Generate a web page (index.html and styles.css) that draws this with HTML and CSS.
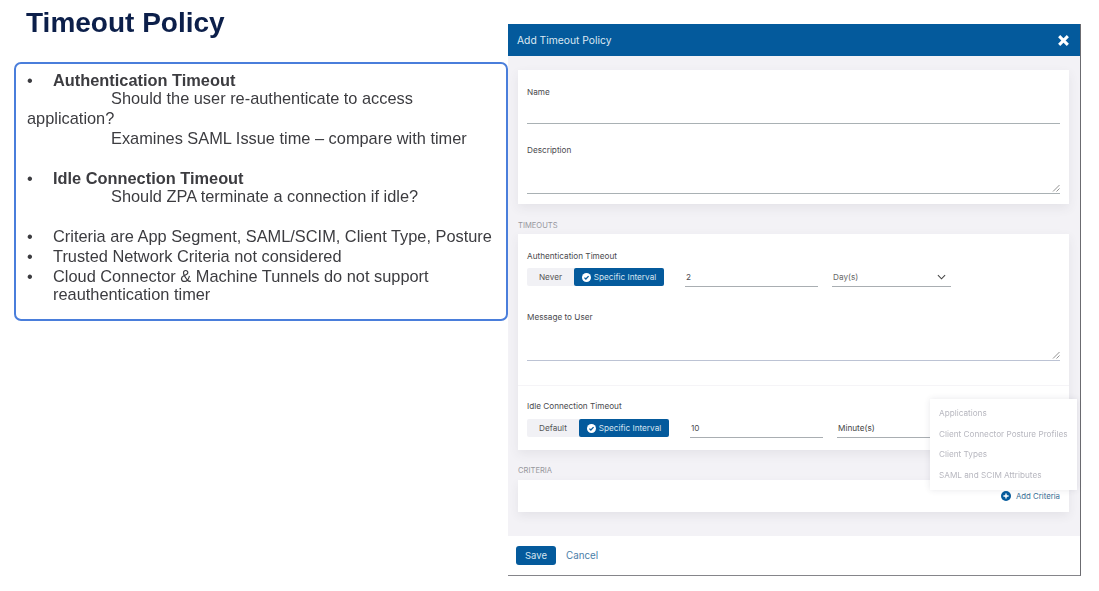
FILE: index.html
```html
<!DOCTYPE html>
<html lang="en">
<head>
<meta charset="utf-8">
<title>Timeout Policy</title>
<link rel="stylesheet" href="styles.css">
</head>
<body>
<main class="slide">
  <section class="left">
    <h1 class="title">Timeout Policy</h1>
    <div class="notes">
      <p class="row"><span class="dot">•</span><strong>Authentication Timeout</strong></p>
      <p class="sub">Should the user re-authenticate to access</p>
      <p class="wrapline">application?</p>
      <p class="sub">Examines SAML Issue time – compare with timer</p>
      <p class="row gap"><span class="dot">•</span><strong>Idle Connection Timeout</strong></p>
      <p class="sub">Should ZPA terminate a connection if idle?</p>
      <p class="row gap"><span class="dot">•</span><span>Criteria are App Segment, SAML/SCIM, Client Type, Posture</span></p>
      <p class="row tight"><span class="dot">•</span><span>Trusted Network Criteria not considered</span></p>
      <p class="row tight"><span class="dot">•</span><span>Cloud Connector &amp; Machine Tunnels do not support<br>reauthentication timer</span></p>
    </div>
  </section>

  <section class="dialog">
    <header class="dialog-head">
      <span>Add Timeout Policy</span>
      <svg class="close" viewBox="0 0 12 12" width="13" height="13"><path d="M2 2l8 8M10 2l-8 8" stroke="#fff" stroke-width="2.8" fill="none"/></svg>
    </header>
    <div class="dialog-body">
      <div class="card card-general">
        <div class="label">Name</div>
        <div class="line name-line"></div>
        <div class="label desc-label">Description</div>
        <div class="line desc-line">
          <svg class="grip" viewBox="0 0 8 8" width="8" height="8"><path d="M1 7.5L7.5 1M4.5 7.5L7.5 4.5" stroke="#777" stroke-width=".8" fill="none"/></svg>
        </div>
      </div>

      <div class="section-label timeouts-label">TIMEOUTS</div>
      <div class="card card-timeouts">
        <div class="auth-part">
          <div class="label">Authentication Timeout</div>
          <div class="controls">
            <div class="toggle">
              <span class="opt opt-never">Never</span>
              <span class="opt on">
                <svg class="check" viewBox="0 0 10 10" width="9" height="9"><circle cx="5" cy="5" r="5" fill="#fff"/><path d="M2.7 5.1l1.6 1.6 3-3.2" stroke="#045a9c" stroke-width="1.4" fill="none"/></svg>
                Specific Interval
              </span>
            </div>
            <div class="field field-num">2</div>
            <div class="field field-sel">Day(s)
              <svg viewBox="0 0 10 6" width="9" height="6"><path d="M1 1l4 4 4-4" stroke="#444" stroke-width="1.2" fill="none"/></svg>
            </div>
          </div>
          <div class="label msg-label">Message to User</div>
          <div class="line msg-line">
            <svg class="grip" viewBox="0 0 8 8" width="8" height="8"><path d="M1 7.5L7.5 1M4.5 7.5L7.5 4.5" stroke="#777" stroke-width=".8" fill="none"/></svg>
          </div>
        </div>
        <div class="idle-part">
          <div class="label">Idle Connection Timeout</div>
          <div class="controls idle-controls">
            <div class="toggle">
              <span class="opt opt-default">Default</span>
              <span class="opt on">
                <svg class="check" viewBox="0 0 10 10" width="9" height="9"><circle cx="5" cy="5" r="5" fill="#fff"/><path d="M2.7 5.1l1.6 1.6 3-3.2" stroke="#045a9c" stroke-width="1.4" fill="none"/></svg>
                Specific Interval
              </span>
            </div>
            <div class="field field-num">10</div>
            <div class="field field-sel dark">Minute(s)</div>
          </div>
        </div>
      </div>

      <div class="section-label criteria-label">CRITERIA</div>
      <div class="card card-criteria">
        <span class="add">
          <svg viewBox="0 0 10 10" width="10" height="10"><circle cx="5" cy="5" r="5" fill="#045a9c"/><path d="M5 2.4v5.2M2.4 5h5.2" stroke="#fff" stroke-width="1.4"/></svg>
          Add Criteria
        </span>
      </div>
    </div>
    <footer class="dialog-foot">
      <span class="save">Save</span>
      <span class="cancel">Cancel</span>
    </footer>
    <div class="menu">
      <div>Applications</div>
      <div>Client Connector Posture Profiles</div>
      <div>Client Types</div>
      <div>SAML and SCIM Attributes</div>
    </div>
  </section>
</main>
</body>
</html>
```
FILE: styles.css
```css
* { box-sizing: border-box; }
html, body { margin: 0; padding: 0; background: #fff; }
body { width: 1099px; height: 591px; overflow: hidden; font-family: "Liberation Sans", Arial, sans-serif; }
p, h1 { margin: 0; }

.slide { display: flex; align-items: flex-start; width: 1099px; height: 591px; filter: blur(0.6px); }

.left { width: 508px; padding: 5px 0 0 14px; flex: none; }
.title { font-size: 28px; line-height: 36px; font-weight: 700; color: #0c1f4a; padding-left: 12px; }
.notes {
  margin-top: 21px; width: 494px; height: 259px;
  border: 2px solid #4a7edb; border-radius: 7px;
  padding: 7px 0 0 11px;
  font-size: 16.37px; color: #3c3c40; line-height: 18px;
}
.row { display: flex; }
.row strong { font-weight: 700; }
.dot { width: 26px; flex: none; }
.sub { padding-left: 84px; }
.wrapline { margin-top: 2px; margin-bottom: 2px; }
.gap { margin-top: 22px; }
.row.tight { margin-top: 2px; }

.dialog {
  position: relative; margin-top: 24px; width: 573px; height: 552px; flex: none;
  display: flex; flex-direction: column;
  border-right: 1.5px solid #6b6b70; border-bottom: 1.5px solid #85858a;
  background: #fff;
}
.dialog-head {
  height: 32px; flex: none; background: #045a9c; color: #dce8f2;
  display: flex; align-items: center; justify-content: space-between;
  padding: 0 10px 0 9px; font-size: 10.3px;
  font-family: Inter, "Liberation Sans", sans-serif;
}
.dialog-body {
  height: 480px; flex: none; background: #f3f2f6; padding: 14px 11px 0 10px;
  font-family: Inter, "Liberation Sans", sans-serif; color: #444;
}
.card { background: #fff; box-shadow: 0 4px 10px rgba(60, 60, 80, .08); }
.card-general { height: 134px; padding: 17px 9px 0 9px; }
.label { font-size: 8.2px; line-height: 10px; color: #4a4a4e; }
.line { position: relative; border-bottom: 1px solid #a9b1b4; }
.name-line { height: 27px; }
.desc-label { margin-top: 21px; }
.desc-line { height: 39px; }
.grip { position: absolute; right: 0; bottom: 1px; }
.section-label { font-size: 7.6px; line-height: 10px; color: #97979d; }
.timeouts-label { margin-top: 17px; }
.card-timeouts { margin-top: 3px; height: 216px; }
.auth-part { height: 152px; padding: 17px 9px 0 9px; border-bottom: 1px solid #f5f4f7; }
.controls { display: flex; align-items: flex-end; margin-top: 7px; height: 19px; }
.idle-controls { margin-top: 8px; }
.toggle { display: flex; flex: none; height: 18px; background: #f1f1f5; border-radius: 2px; font-size: 8.2px; margin-bottom: 1px; }
.opt { display: flex; align-items: center; justify-content: center; color: #555; }
.opt-never { width: 47px; }
.opt-default { width: 52px; }
.opt.on { width: 90px; gap: 3px; background: #045a9c; color: #d6e4f0; border-radius: 2px; }
.check { flex: none; }
.field {
  height: 19px; display: flex; align-items: center; justify-content: space-between;
  border-bottom: 1px solid #a9aeb2; font-size: 8.2px; color: #4c4c50; padding-bottom: 1px;
}
.field-num { width: 133px; margin-left: 21px; padding-left: 1px; }
.field-sel { width: 119px; margin-left: 14px; padding: 0 5px 1px 1px; color: #666; }
.field-sel.dark { color: #444; }
.msg-label { margin-top: 25px; }
.msg-line { height: 39px; border-bottom-color: #bcc3d4; }
.idle-part { padding: 15px 9px 0 9px; }
.criteria-label { margin-top: 16px; }
.card-criteria { margin-top: 4px; height: 32px; display: flex; align-items: flex-end; justify-content: flex-end; padding: 0 9px 11px 0; }
.add { display: flex; align-items: center; gap: 5px; font-size: 7.8px; line-height: 10px; color: #3a6f96; }
.dialog-foot { display: flex; align-items: center; flex: 1; padding: 0 0 0 8px; font-family: Inter, "Liberation Sans", sans-serif; }
.save { width: 40px; height: 19px; background: #045a9c; border-radius: 3px; color: #d6e4f0; font-size: 9.5px; display: flex; align-items: center; justify-content: center; }
.cancel { margin-left: 10px; font-size: 9.8px; color: #4b7ea8; }
.menu {
  position: absolute; left: 422px; top: 375px; width: 147px; height: 91px;
  background: #fff; box-shadow: 0 0 6px rgba(60, 60, 80, .12);
  padding: 4px 0 0 9px;
  font-family: Inter, "Liberation Sans", sans-serif; font-size: 8.2px; color: #b7b7bf;
  display: flex; flex-direction: column;
}
.menu div { height: 20.5px; display: flex; align-items: center; white-space: nowrap; }
```
